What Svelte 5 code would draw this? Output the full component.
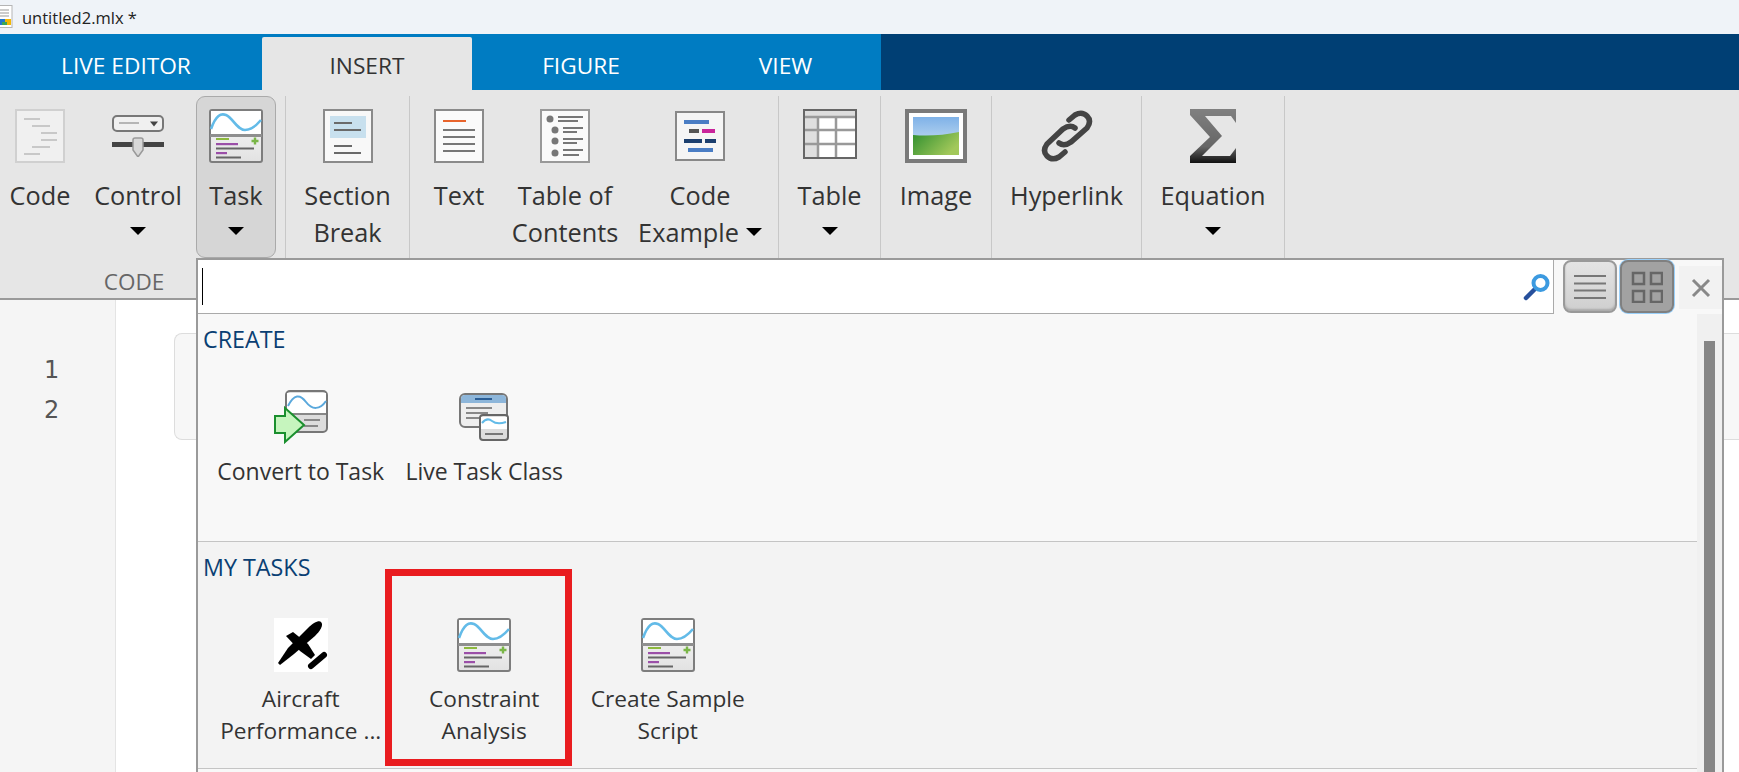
<script>
  const tabs = [
    { label: 'LIVE EDITOR', cls: 'live' },
    { label: 'INSERT', cls: 'insert' },
    { label: 'FIGURE', cls: 'figure' },
    { label: 'VIEW', cls: 'view' }
  ];
</script>

{#snippet taskIcon(w, h)}
  <svg width={w} height={h} viewBox="0 0 54 54">
    <defs>
      <linearGradient id="tk" x1="0" y1="0" x2="0" y2="1"><stop offset="0" stop-color="#fafafa"/><stop offset="1" stop-color="#e2e2e2"/></linearGradient>
    </defs>
    <rect x="1" y="1" width="52" height="52" rx="2" fill="url(#tk)" stroke="#7d7d7d" stroke-width="2"/>
    <rect x="2" y="2" width="50" height="23" fill="#fff"/>
    <rect x="1" y="25" width="52" height="3" fill="#8f8f8f"/>
    <path d="M2 20C7 6 12 4 17 6C24 9 28 21 36 21C42 21 47 17 52 11" fill="none" stroke="#63bbe8" stroke-width="2.600"/>
    <rect x="7" y="29" width="13" height="2" fill="#8db93e"/>
    <path d="M46 28.500v7M42.500 32h7" stroke="#7ab648" stroke-width="2.400"/>
    <rect x="7" y="34" width="22" height="2.200" fill="#9b4fa8"/>
    <rect x="7" y="38.500" width="38" height="2" fill="#666"/>
    <rect x="7" y="43" width="11" height="2.200" fill="#9b4fa8"/>
    <rect x="7" y="47.500" width="25" height="2" fill="#666"/>
  </svg>
{/snippet}

<div class="app">
  <header class="titlebar">
    <svg class="fileicon" width="13" height="24" viewBox="0 0 13 24">
      <rect x="-3" y="0.500" width="15" height="22" fill="#fff" stroke="#b5b5b5"/>
      <path d="M0 5h9M0 8h9M0 11h9" stroke="#999" stroke-width="1"/>
      <rect x="0" y="14" width="5" height="6" fill="#2277cc"/>
      <rect x="5" y="14" width="6" height="6" fill="#f2b705"/>
      <rect x="2" y="17" width="5" height="3" fill="#3aa655"/>
    </svg>
    <span>untitled2.mlx *</span>
  </header>

  <nav class="tabs">
    {#each tabs as t}
      <div class={'tab ' + t.cls}>{t.label}</div>
    {/each}
    <div class="tabfill"></div>
  </nav>

  <section class="ribbon">
    <div class="group g-code">
      <div class="items">
        <div class="item w80">
          <div class="icon">
            <svg width="50" height="54" viewBox="0 0 50 54">
              <rect x="1" y="1" width="48" height="52" fill="#f0f0f0" stroke="#d0d0d0" stroke-width="2"/>
              <path d="M9 10h16M17 17h18M26 24h16M26 31h16M17 38h18M9 45h16" stroke="#c8c8c8" stroke-width="2"/>
            </svg>
          </div>
          <div class="label">Code</div>
        </div>
        <div class="item w116">
          <div class="icon">
            <svg width="52" height="42" viewBox="0 0 52 42">
              <rect x="1" y="1" width="50" height="15" rx="4" fill="#f0f0f0" stroke="#777" stroke-width="2"/>
              <path d="M7 8h20" stroke="#b5b5b5" stroke-width="2"/>
              <path d="M38 6.500h8l-4 5z" fill="#444"/>
              <rect x="0" y="27" width="52" height="5" fill="#444"/>
              <path d="M21 25q0-2 2-2h6q2 0 2 2v10l-5 7-5-7z" fill="#d8d8d8" stroke="#999" stroke-width="1.500"/>
            </svg>
          </div>
          <div class="label">Control</div>
          <i class="arrow"></i>
        </div>
        <div class="item w80 active">
          <div class="icon">{@render taskIcon(54, 54)}</div>
          <div class="label">Task</div>
          <i class="arrow"></i>
        </div>
      </div>
      <div class="grouplabel">CODE</div>
    </div>

    <div class="group g-section">
      <div class="items">
        <div class="item full">
          <div class="icon">
            <svg width="50" height="54" viewBox="0 0 50 54">
              <rect x="1" y="1" width="48" height="52" fill="#f8f8f8" stroke="#8a8a8a" stroke-width="2"/>
              <rect x="7" y="7" width="36" height="22" fill="#c8e0ee"/>
              <path d="M11 14h18M11 21h27M11 37h18M11 44h27" stroke="#6a6a6a" stroke-width="2"/>
            </svg>
          </div>
          <div class="label">Section<br />Break</div>
        </div>
      </div>
    </div>

    <div class="group g-insert">
      <div class="items">
        <div class="item w98">
          <div class="icon">
            <svg width="50" height="54" viewBox="0 0 50 54">
              <rect x="1" y="1" width="48" height="52" fill="#fafafa" stroke="#8a8a8a" stroke-width="2"/>
              <path d="M9 12h23" stroke="#e8642c" stroke-width="2"/>
              <path d="M9 21h32M9 28h32M9 35h32M9 42h32" stroke="#777" stroke-width="2"/>
            </svg>
          </div>
          <div class="label">Text</div>
        </div>
        <div class="item w114">
          <div class="icon">
            <svg width="50" height="54" viewBox="0 0 50 54">
              <rect x="1" y="1" width="48" height="52" fill="#fafafa" stroke="#999" stroke-width="2"/>
              <circle cx="10" cy="10" r="3.500" fill="#777"/>
              <circle cx="15" cy="21" r="3.500" fill="#777"/>
              <circle cx="15" cy="32" r="3.500" fill="#777"/>
              <circle cx="15" cy="44" r="3.500" fill="#777"/>
              <path d="M18 8h25M18 12h20M23 19h20M23 23h14M23 30h20M23 34h14M23 41h20M23 46h16" stroke="#777" stroke-width="2"/>
            </svg>
          </div>
          <div class="label">Table of<br />Contents</div>
        </div>
        <div class="item grow">
          <div class="icon">
            <svg width="50" height="50" viewBox="0 0 50 50">
              <rect x="1" y="1" width="48" height="48" fill="#f5f5f5" stroke="#888" stroke-width="2"/>
              <path d="M9 11h25" stroke="#4a7dc4" stroke-width="4"/>
              <path d="M14 20h10" stroke="#555" stroke-width="4"/>
              <path d="M27 20h13" stroke="#c9259b" stroke-width="4"/>
              <path d="M9 30h18M30 30h11" stroke="#1c3f6e" stroke-width="4"/>
              <path d="M13 39h25" stroke="#4a7dc4" stroke-width="4"/>
            </svg>
          </div>
          <div class="label">Code<br />Example<i class="arrow inline"></i></div>
        </div>
      </div>
    </div>

    <div class="group g-table">
      <div class="items">
        <div class="item full">
          <div class="icon top">
            <svg width="54" height="50" viewBox="0 0 54 50">
              <rect x="1" y="1" width="52" height="48" fill="#fff" stroke="#666" stroke-width="2"/>
              <rect x="2" y="2" width="50" height="6" fill="#ddd"/>
              <rect x="2" y="8" width="13" height="40" fill="#dfdfdf"/>
              <path d="M2 8h50M2 21h50M2 35h50M15 8v40M33 8v40" stroke="#999" stroke-width="2.500"/>
            </svg>
          </div>
          <div class="label">Table</div>
          <i class="arrow"></i>
        </div>
      </div>
    </div>

    <div class="group g-image">
      <div class="items">
        <div class="item full">
          <div class="icon">
            <svg width="62" height="54" viewBox="0 0 62 54">
              <defs>
                <linearGradient id="sky" x1="0" y1="0" x2="0" y2="1"><stop offset="0" stop-color="#7fb2e8"/><stop offset="1" stop-color="#d8e8f4"/></linearGradient>
                <linearGradient id="grass" x1="0" y1="0" x2="1" y2="0.500"><stop offset="0" stop-color="#2f8f2f"/><stop offset="1" stop-color="#a2c85a"/></linearGradient>
              </defs>
              <rect x="2" y="2" width="58" height="50" fill="#fff" stroke="#7a7a7a" stroke-width="4"/>
              <rect x="8" y="8" width="46" height="38" fill="url(#sky)"/>
              <path d="M8 26q22 2 46-3v23H8z" fill="url(#grass)"/>
            </svg>
          </div>
          <div class="label">Image</div>
        </div>
      </div>
    </div>

    <div class="group g-link">
      <div class="items">
        <div class="item full">
          <div class="icon">
            <svg width="54" height="54" viewBox="0 0 54 54">
              <g fill="none" stroke="#444" stroke-width="5.500" stroke-linecap="round">
                <path d="M19 34Q24 38 31 33L47 19Q52 12 47 7Q42 2 35 6L29 11"/>
                <path d="M35 19Q30 15 23 20L7 35Q2 42 7 47Q12 52 19 48L25 43"/>
              </g>
            </svg>
          </div>
          <div class="label">Hyperlink</div>
        </div>
      </div>
    </div>

    <div class="group g-eq">
      <div class="items">
        <div class="item full">
          <div class="icon">
            <svg width="46" height="54" viewBox="0 0 46 54">
              <defs><linearGradient id="sig" x1="0" y1="0" x2="0" y2="1"><stop offset="0" stop-color="#808080"/><stop offset="0.700" stop-color="#666"/><stop offset="1" stop-color="#111"/></linearGradient></defs>
              <path d="M0 0H46V14L41 7H15L32 27L12 47H40L46 39V54H0V47L20 28L0 6Z" fill="url(#sig)"/>
            </svg>
          </div>
          <div class="label">Equation</div>
          <i class="arrow"></i>
        </div>
      </div>
    </div>
  </section>

  <main class="editor">
    <div class="gutter">
      <div>1</div>
      <div>2</div>
    </div>
    <div class="doc">
      <div class="codeblock"></div>
    </div>
  </main>

  <aside class="popup">
    <div class="searchrow">
      <div class="search">
        <i class="caret"></i>
        <svg width="28" height="28" viewBox="0 0 28 28">
          <path d="M11 17L3 25" stroke="#27509c" stroke-width="4.500" stroke-linecap="round"/>
          <circle cx="17.500" cy="10" r="7" fill="#fff" stroke="#3c9ae0" stroke-width="4"/>
        </svg>
      </div>
      <div class="vbtn">
        <svg width="32" height="26" viewBox="0 0 32 26"><path d="M0 2h32M0 9.500h32M0 16.500h32M0 24h32" stroke="#777" stroke-width="2.200"/></svg>
      </div>
      <div class="vbtn on">
        <svg width="32" height="32" viewBox="0 0 32 32" fill="none" stroke="#666" stroke-width="2.500"><rect x="2" y="2" width="11" height="11"/><rect x="20" y="2" width="11" height="11"/><rect x="2" y="20" width="11" height="11"/><rect x="20" y="20" width="11" height="11"/></svg>
      </div>
      <div class="close">
        <svg width="20" height="20" viewBox="0 0 20 20"><path d="M2 2l16 16M18 2L2 18" stroke="#888" stroke-width="3"/></svg>
      </div>
    </div>

    <div class="tsection create">
      <h3>CREATE</h3>
      <div class="tiles">
        <div class="tile">
          <div class="ticon">
            <svg width="54" height="54" viewBox="0 0 54 54">
              <rect x="12" y="1" width="41" height="41" rx="4" fill="#ddd" stroke="#777" stroke-width="2"/>
              <path d="M13 3h39v20H13z" fill="#fff"/>
              <path d="M13 24h39" stroke="#888" stroke-width="2"/>
              <path d="M14 16C20 4 26 4 32 12C38 20 46 20 52 11" fill="none" stroke="#5aa8dc" stroke-width="2"/>
              <path d="M30 30h16M30 36h14" stroke="#888" stroke-width="2"/>
              <path d="M1 26h10V18L30 35 11 52V43H1z" fill="#c6f5be" stroke="#1a8f2e" stroke-width="2"/>
            </svg>
          </div>
          <div class="tlabel">Convert to Task</div>
        </div>
        <div class="tile">
          <div class="ticon">
            <svg width="50" height="48" viewBox="0 0 50 48">
              <rect x="1" y="1" width="47" height="33" rx="5" fill="#eee" stroke="#777" stroke-width="2"/>
              <path d="M2 6q0-4 4-4h37q4 0 4 4v4H2z" fill="#8db6da"/>
              <path d="M16 6h17" stroke="#2a5d95" stroke-width="2"/>
              <path d="M7 15h26M7 20h22M7 25h20" stroke="#888" stroke-width="2"/>
              <rect x="21" y="22" width="28" height="25" rx="3" fill="#ddd" stroke="#666" stroke-width="2"/>
              <path d="M22 24h26v12H22z" fill="#fff"/>
              <path d="M23 30q5-6 10-2t14 1" fill="none" stroke="#63bbe8" stroke-width="2"/>
              <path d="M26 41h18" stroke="#777" stroke-width="2"/>
            </svg>
          </div>
          <div class="tlabel">Live Task Class</div>
        </div>
      </div>
    </div>

    <div class="tsection mine">
      <h3>MY TASKS</h3>
      <div class="tiles">
        <div class="tile">
          <div class="ticon">
            <svg width="54" height="54" viewBox="0 0 54 54">
              <rect width="54" height="54" fill="#fff"/>
              <path d="M47 4C50 7 46 13 41 18L20 36L6 47L4 45L14 30L34 10C39 5 45 2 47 4Z" fill="#000"/>
              <path d="M12 18L19 14L34 26L41 37L37 41L26 33Z" fill="#000"/>
              <path d="M37 48L50 37" stroke="#000" stroke-width="6" stroke-linecap="round"/>
            </svg>
          </div>
          <div class="tlabel two">Aircraft<br />Performance ...</div>
        </div>
        <div class="tile">
          <div class="ticon">{@render taskIcon(54, 54)}</div>
          <div class="tlabel two">Constraint<br />Analysis</div>
        </div>
        <div class="tile">
          <div class="ticon">{@render taskIcon(54, 54)}</div>
          <div class="tlabel two">Create Sample<br />Script</div>
        </div>
      </div>
    </div>

    <div class="track"><div class="thumb"></div></div>
  </aside>

  <div class="annotation"></div>
</div>

<style>
  :global(body) { margin: 0; overflow: hidden; background: #fff; }
  .app {
    position: relative; width: 1739px; height: 772px; overflow: hidden;
    font-family: "Open Sans", "Noto Sans", sans-serif; color: #333;
  }
  .app svg { filter: blur(0.4px); }
  .titlebar {
    height: 34px; background: #eff3f8; display: flex; align-items: center; gap: 9px;
    color: #222; box-sizing: border-box;
  }
  .titlebar span { font-size: 16.500px; }
  .tabs { height: 56px; display: flex; background: #007cc2; }
  .tab {
    display: flex; align-items: center; justify-content: center; color: #fff;
    font-size: 22.700px; padding-top: 6px; box-sizing: border-box;
  }
  .live { width: 252px; margin-right: 10px; }
  .insert { width: 210px; margin-top: 3px; padding-top: 3px; background: #e6e6e6; color: #333; border-radius: 2px 2px 0 0; }
  .figure { width: 218px; }
  .view { width: 191px; }
  .tabfill { flex: 1; background: #003f74; }

  .ribbon {
    height: 210px; background: #e6e6e6; display: flex; box-sizing: border-box;
    border-bottom: 2px solid #9a9a9a;
  }
  .group { display: flex; flex-direction: column; flex: none; }
  .items {
    margin-top: 6px; height: 162px; display: flex; box-sizing: border-box;
    border-right: 1px solid #c8c8c8;
  }
  .g-code { width: 286px; }
  .g-section { width: 124px; }
  .g-insert { width: 369px; }
  .g-table { width: 102px; }
  .g-image { width: 111px; }
  .g-link { width: 150px; }
  .g-eq { width: 143px; }
  .item {
    position: relative; display: flex; flex-direction: column; align-items: center;
    box-sizing: border-box; padding-top: 13px; flex: none;
  }
  .w80 { width: 80px; }
  .w116 { width: 116px; }
  .w98 { width: 98px; }
  .w114 { width: 114px; }
  .full, .grow { flex: 1; }
  .active {
    background: #d6d6d6; border: 1px solid #aaa; border-radius: 9px; padding-top: 12px;
    height: 162px;
  }
  .icon { height: 54px; display: flex; align-items: center; justify-content: center; }
  .icon.top { align-items: flex-start; }
  .label {
    margin-top: 14px; font-size: 25.300px; line-height: 37px; text-align: center;
    white-space: nowrap; color: #333;
  }
  .arrow {
    display: block; width: 0; height: 0; margin-top: 13px;
    border-left: 8px solid transparent; border-right: 8px solid transparent;
    border-top: 8px solid #000;
  }
  .arrow.inline { display: inline-block; margin: 0 0 6px 7px; vertical-align: middle; }
  .grouplabel {
    font-size: 22.500px; color: #666; text-align: center; padding-right: 18px; line-height: 24px; margin-top: 12px;
  }

  .editor { height: 472px; display: flex; background: #fff; }
  .gutter {
    width: 116px; background: #f5f5f5; border-right: 1px solid #e4e4e4; box-sizing: border-box;
    font-family: "DejaVu Sans", sans-serif; font-size: 24px; color: #555; padding: 50px 0 0 44px; line-height: 40px;
  }
  .doc { flex: 1; padding: 33px 0 0 58px; }
  .codeblock {
    height: 107px; background: #f7f7f7; border: 1px solid #ddd; border-right: 0;
    border-radius: 8px 0 0 8px; box-sizing: border-box;
  }

  .popup {
    position: absolute; left: 196px; top: 258px; width: 1528px; height: 514px;
    box-sizing: border-box; border: 2px solid #9a9a9a; border-bottom: 0; background: #f8f8f8;
  }
  .searchrow { height: 54px; display: flex; align-items: flex-start; }
  .search {
    width: 1357px; height: 54px; background: #fff; border: 1px solid #aaa; border-width: 0 1px 1px 0;
    box-sizing: border-box; display: flex; align-items: center; justify-content: space-between;
    padding: 0 2px 0 4px;
  }
  .caret { width: 1px; height: 37px; background: #000; display: block; }
  .vbtn {
    width: 54px; height: 53px; margin-left: 9px; box-sizing: border-box;
    border: 2px solid #999; border-radius: 8px; background: linear-gradient(#e4e4e4, #cfcfcf);
    display: flex; align-items: center; justify-content: center;
    box-shadow: inset 0 -2px 2px #aaa;
  }
  .vbtn.on {
    margin-left: 3px; background: #a2a2a2; border-color: #808080; box-shadow: 0 0 0 1px #9ad0fa;
  }
  .close {
    width: 43px; height: 43px; margin: 6px 0 0 5px; background: #f2f2f2;
    display: flex; align-items: center; justify-content: center;
  }
  .tsection { box-sizing: border-box; border-bottom: 1px solid #c4c4c4; padding-left: 5px; }
  .tsection h3 {
    margin: 0; font-size: 23.300px; font-weight: 400; color: #0a3f73; line-height: 32px;
  }
  .create { height: 228px; padding-top: 9px; background: #f8f8f8; }
  .mine { height: 227px; padding-top: 9px; background: #f3f3f3; }
  .tiles { display: flex; padding-left: 6px; }
  .tile {
    width: 183.500px; display: flex; flex-direction: column; align-items: center; flex: none;
  }
  .ticon { height: 54px; margin-top: 35px; display: flex; align-items: center; justify-content: center; }
  .tlabel {
    margin-top: 11px; font-size: 23px; line-height: 33px; text-align: center; white-space: nowrap; color: #333;
  }
  .tlabel.two { font-size: 22.700px; line-height: 32px; }
  .track {
    position: absolute; right: 0; top: 54px; bottom: 0; width: 25px; background: #f0f0f0;
    padding: 27px 7px 0; box-sizing: border-box;
  }
  .thumb { height: 100%; background: #868686; }
  .annotation {
    position: absolute; left: 385px; top: 569px; width: 187px; height: 197px;
    box-sizing: border-box; border: 7px solid #e91c1f;
  }
</style>
